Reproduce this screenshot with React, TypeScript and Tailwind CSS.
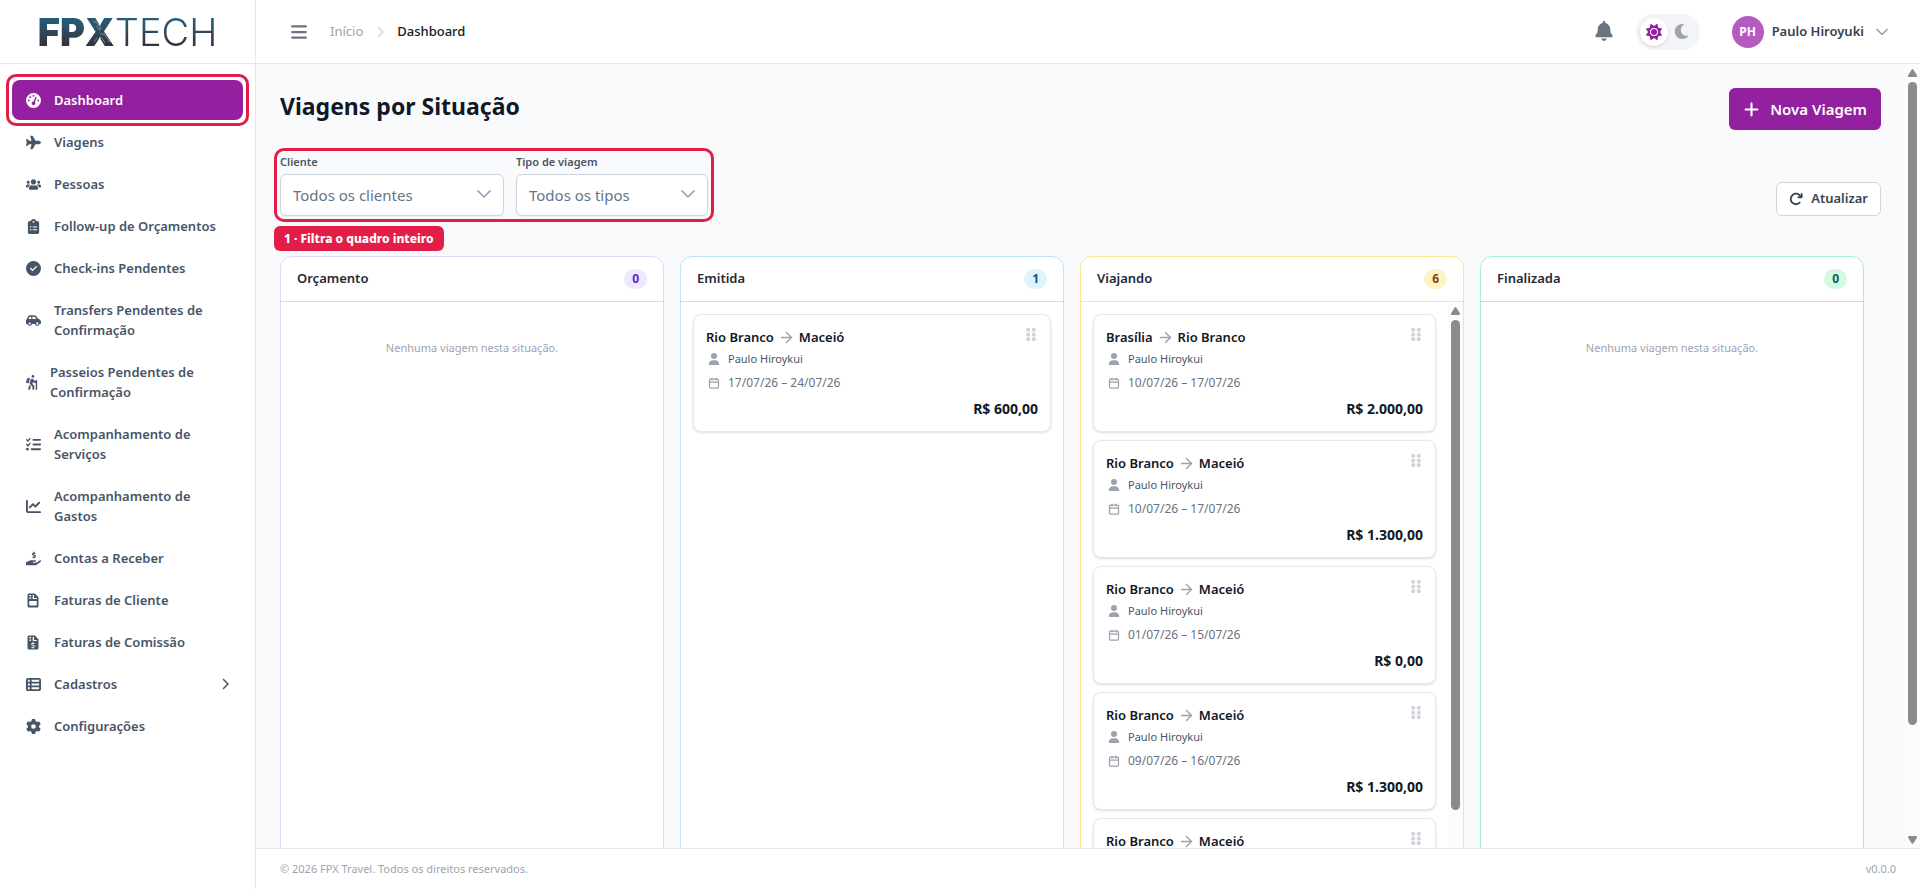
import type { ComponentType, ReactNode } from "react";
import {
  FaArrowRotateRight,
  FaBars,
  FaBell,
  FaCarSide,
  FaChartLine,
  FaChevronRight,
  FaCircleCheck,
  FaClipboardList,
  FaGaugeHigh,
  FaGear,
  FaGripVertical,
  FaListCheck,
  FaPersonHiking,
  FaPlane,
  FaPlus,
  FaSun,
  FaTableList,
  FaUser,
} from "react-icons/fa6";
import { FaHandHoldingUsd, FaMoon, FaUsers } from "react-icons/fa";
import { ArrowRight, Calendar, ChevronDown } from "lucide-react";

function InvoiceIcon({ className }: { className?: string }) {
  return (
    <svg viewBox="0 0 12 15" className={className} fill="currentColor" fillRule="evenodd" aria-hidden="true">
      <path d="M2 .5H7.800L11.500 4.200V13A1.500 1.500 0 0 1 10 14.500H2A1.500 1.500 0 0 1 .5 13V2A1.500 1.500 0 0 1 2 .5ZM2.200 2H4.200V3.300H2.200ZM2.200 4.500H4.200V5.800H2.200ZM5.700 2H7V5H9.800V5.900H5.700ZM3 8A.8.8 0 0 0 2.200 8.800V11.700A.8.8 0 0 0 3 12.500H9A.8.8 0 0 0 9.800 11.700V8.800A.8.8 0 0 0 9 8Z" />
    </svg>
  );
}

function InvoiceDollarIcon({ className }: { className?: string }) {
  return (
    <svg viewBox="0 0 12 15" className={className} aria-hidden="true">
      <path
        fill="currentColor"
        fillRule="evenodd"
        d="M2 .5H7.800L11.500 4.200V13A1.500 1.500 0 0 1 10 14.500H2A1.500 1.500 0 0 1 .5 13V2A1.500 1.500 0 0 1 2 .5ZM2.200 2H4.200V3.300H2.200ZM2.200 4.500H4.200V5.800H2.200ZM5.700 2H7V5H9.800V5.900H5.700Z"
      />
      <path
        fill="none"
        stroke="#fff"
        strokeWidth="1"
        d="M6 7.200V8.200M6 12.400V13.400M7.700 8.700C7.200 8.200 4.500 7.800 4.500 9.300 4.500 10.700 7.700 10 7.700 11.400 7.700 12.700 4.900 12.500 4.300 11.900"
      />
    </svg>
  );
}

type NavItem = {
  label: string;
  icon: ComponentType<{ className?: string }>;
  slot?: string;
  active?: boolean;
  submenu?: boolean;
};

const nav: NavItem[] = [
  { label: "Dashboard", icon: FaGaugeHigh, active: true },
  { label: "Viagens", icon: FaPlane },
  { label: "Pessoas", icon: FaUsers },
  { label: "Follow-up de Orçamentos", icon: FaClipboardList },
  { label: "Check-ins Pendentes", icon: FaCircleCheck },
  { label: "Transfers Pendentes de Confirmação", icon: FaCarSide },
  { label: "Passeios Pendentes de Confirmação", icon: FaPersonHiking, slot: "w-3.5" },
  { label: "Acompanhamento de Serviços", icon: FaListCheck },
  { label: "Acompanhamento de Gastos", icon: FaChartLine },
  { label: "Contas a Receber", icon: FaHandHoldingUsd },
  { label: "Faturas de Cliente", icon: InvoiceIcon },
  { label: "Faturas de Comissão", icon: InvoiceDollarIcon },
  { label: "Cadastros", icon: FaTableList, submenu: true },
  { label: "Configurações", icon: FaGear },
];

type Trip = { from: string; to: string; client: string; dates: string; price: string };
type Column = { title: string; count: number; border: string; badge: string; trips: Trip[]; scroll?: boolean };

const client = "Paulo Hiroykui";

const columns: Column[] = [
  { title: "Orçamento", count: 0, border: "border-[#ddd6fe]", badge: "bg-[#ede9fe] text-[#5b21b6]", trips: [] },
  {
    title: "Emitida",
    count: 1,
    border: "border-[#bae6fd]",
    badge: "bg-[#e0f2fe] text-[#075985]",
    trips: [{ from: "Rio Branco", to: "Maceió", client, dates: "17/07/26 – 24/07/26", price: "R$ 600,00" }],
  },
  {
    title: "Viajando",
    count: 6,
    border: "border-[#fde68a]",
    badge: "bg-[#fef3c7] text-[#92400e]",
    scroll: true,
    trips: [
      { from: "Brasília", to: "Rio Branco", client, dates: "10/07/26 – 17/07/26", price: "R$ 2.000,00" },
      { from: "Rio Branco", to: "Maceió", client, dates: "10/07/26 – 17/07/26", price: "R$ 1.300,00" },
      { from: "Rio Branco", to: "Maceió", client, dates: "01/07/26 – 15/07/26", price: "R$ 0,00" },
      { from: "Rio Branco", to: "Maceió", client, dates: "09/07/26 – 16/07/26", price: "R$ 1.300,00" },
      { from: "Rio Branco", to: "Maceió", client, dates: "09/07/26 – 16/07/26", price: "R$ 1.300,00" },
    ],
  },
  { title: "Finalizada", count: 0, border: "border-[#a7f3d0]", badge: "bg-[#d1fae5] text-[#065f46]", trips: [] },
];

function Logo() {
  return (
    <a
      href="#"
      aria-label="FPXTECH"
      className="relative flex bg-linear-to-b from-[#265c78] from-25% to-[#33343f] to-75% bg-clip-text font-[Inter,sans-serif] text-[38px] leading-[48px] text-transparent"
    >
      <span className="font-black">FPX</span>
      <span className="font-light">TECH</span>
      <svg
        viewBox="0 0 28 27"
        className="absolute top-[11px] left-[50px] h-[27px] w-7"
        fill="none"
        stroke="#b4c6d2"
        strokeWidth=".5"
        aria-hidden="true"
      >
        <path d="M5 3h3l4 6M8 7l4 5M12 15h4l5 7M11 18l3 1 3 5M18 14l3 5M6 23l3-4" />
        <circle cx="12.500" cy="9.500" r=".6" />
        <circle cx="21.500" cy="22.500" r=".6" />
      </svg>
    </a>
  );
}

function RailArrow({ className }: { className?: string }) {
  return (
    <svg viewBox="0 0 9 8" className={`h-2 w-[9px] shrink-0 ${className ?? ""}`} fill="#8b8b8b">
      <path d="M4.500 0C5 0 5.400.6 9 6.500 9 7.500 8.500 8 8 8H1C.5 8 0 7.500 0 6.500 3.600.6 4 0 4.500 0Z" />
    </svg>
  );
}

function Rail({ thumb, end }: { thumb: string; end?: boolean }) {
  return (
    <div aria-hidden="true" className="flex w-[15px] shrink-0 flex-col items-center bg-[#fcfcfc] pt-[5px] pb-1">
      <RailArrow />
      <div className={`mt-[5px] w-[9px] rounded-full bg-[#8b8b8b] ${thumb}`} />
      {end && <RailArrow className="mt-auto rotate-180" />}
    </div>
  );
}

function Filter({ id, label, width, children }: { id: string; label: string; width: string; children: ReactNode }) {
  return (
    <div className="flex flex-col gap-1">
      <label htmlFor={id} className="text-[11px] leading-4 font-semibold text-[#4b5563]">
        {label}
      </label>
      <div className={`relative ${width}`}>
        <select
          id={id}
          className="h-[42px] w-full appearance-none rounded-md border border-[#cbd5e1] bg-white pr-10 pl-3 text-[15px] text-[#64748b] shadow-xs"
        >
          {children}
        </select>
        <ChevronDown
          className="pointer-events-none absolute top-2 right-2 size-6 text-[#94a3b8]"
          strokeWidth={1.75}
        />
      </div>
    </div>
  );
}

function TripCard({ trip }: { trip: Trip }) {
  return (
    <article className="shrink-0 rounded-lg border border-[#e5e7eb] bg-white p-3 shadow-sm">
      <div className="flex items-start justify-between">
        <h3 className="flex items-center gap-1 text-[13px] leading-5 font-semibold text-[#111827]">
          {trip.from}
          <ArrowRight className="size-[17px] text-[#9ca3af]" />
          {trip.to}
        </h3>
        <button aria-label="Mover viagem" className="mr-0.5 text-[#d1d5db]">
          <FaGripVertical className="h-[15px] w-[10px]" />
        </button>
      </div>
      <p className="mt-1 flex items-center gap-2 pl-0.5 text-[11px] leading-4 text-[#4b5563]">
        <FaUser className="size-3 text-[#9ca3af]" />
        {trip.client}
      </p>
      <p className="mt-2 flex items-center gap-2 pl-0.5 text-xs leading-4 text-[#6b7280]">
        <Calendar className="size-3 text-[#9ca3af]" strokeWidth={2.5} />
        {trip.dates}
      </p>
      <p className="mt-2 text-right text-sm leading-5 font-bold text-[#111827]">{trip.price}</p>
    </article>
  );
}

function BoardColumn({ column }: { column: Column }) {
  return (
    <section className={`flex w-96 shrink-0 flex-col rounded-xl border bg-white ${column.border}`}>
      <header className={`flex h-[45px] shrink-0 items-center justify-between border-b px-4 ${column.border}`}>
        <h2 className="text-[13px] font-semibold text-[#1f2937]">{column.title}</h2>
        <span className={`rounded-full px-2 text-xs leading-5 font-bold ${column.badge}`}>{column.count}</span>
      </header>
      <div className="flex flex-1">
        <div className="flex flex-1 flex-col gap-2 p-3">
          {column.trips.map((trip, i) => (
            <TripCard key={i} trip={trip} />
          ))}
          {column.trips.length === 0 && (
            <p className="pt-6 text-center text-[11px] leading-5 text-[#9ca3af]">Nenhuma viagem nesta situação.</p>
          )}
        </div>
        {column.scroll && <Rail thumb="h-[490px]" />}
      </div>
    </section>
  );
}

export default function App() {
  return (
    <div className="flex h-screen overflow-hidden bg-[#f9fafb] font-['Noto_Sans',sans-serif] text-[#111827]">
      <aside className="flex w-64 shrink-0 flex-col border-r border-[#e2e8f0] bg-white">
        <div className="flex h-16 shrink-0 items-center justify-center border-b border-[#e2e8f0]">
          <Logo />
        </div>
        <nav className="flex flex-col gap-0.5 px-3 py-4">
          {nav.map(({ label, icon: Icon, slot, active, submenu }) => (
            <a
              key={label}
              href="#"
              className={`relative flex items-center gap-3 rounded-lg px-3 py-2.5 text-[13px] leading-5 font-semibold ${
                active ? "bg-[#93209e] text-white" : "text-[#475569]"
              }`}
            >
              <span className={`flex shrink-0 justify-center ${slot ?? "w-[18px]"}`}>
                <Icon className="h-[15px] w-auto shrink-0" />
              </span>
              <span className="max-w-[168px] flex-1">{label}</span>
              {submenu && <FaChevronRight className="ml-auto size-3" />}
              {active && (
                <span className="pointer-events-none absolute -inset-1.5 rounded-[10px] border-3 border-[#e11d48]" />
              )}
            </a>
          ))}
        </nav>
      </aside>

      <div className="flex min-w-0 flex-1 flex-col">
        <header className="flex h-16 shrink-0 items-center justify-between border-b border-[#e5e7eb] bg-white pr-7 pl-8">
          <div className="flex items-center gap-[22px]">
            <button aria-label="Menu" className="pl-0.5 text-[#6b7280]">
              <FaBars className="size-[18px]" />
            </button>
            <nav className="flex items-center gap-[11px] text-[13px]">
              <a href="#" className="text-[#9ca3af]">
                Início
              </a>
              <FaChevronRight className="size-3 text-[#d1d5db]" />
              <span className="font-medium text-[#111827]">Dashboard</span>
            </nav>
          </div>
          <div className="flex items-center">
            <button aria-label="Notificações" className="mr-[22px] pb-0.5 text-[#6b7280]">
              <FaBell className="size-5" />
            </button>
            <div className="mr-8 flex rounded-full bg-[#f3f4f6] p-1">
              <button
                aria-label="Tema claro"
                className="flex size-7 items-center justify-center rounded-full bg-white text-[#93209e] shadow-sm"
              >
                <FaSun className="size-4" />
              </button>
              <button aria-label="Tema escuro" className="flex size-7 items-center justify-center text-[#9ca3af]">
                <FaMoon className="size-[15px]" />
              </button>
            </div>
            <button className="flex items-center gap-2 text-[13px] font-semibold text-[#374151]">
              <span className="flex size-8 items-center justify-center rounded-full bg-[#b55bc0] text-xs font-bold text-white">
                PH
              </span>
              Paulo Hiroyuki
              <ChevronDown className="size-5 text-[#9ca3af]" />
            </button>
          </div>
        </header>

        <div className="flex min-h-0 flex-1">
          <main className="flex min-w-0 flex-1 flex-col overflow-hidden p-6 pb-0">
            <div className="flex items-start justify-between">
              <h1 className="text-[23px] leading-9 font-bold">Viagens por Situação</h1>
              <button className="flex h-[42px] items-center gap-2.5 rounded-md bg-[#93209e] px-3.5 text-[15px] font-semibold text-white">
                <FaPlus className="size-[17px]" />
                Nova Viagem
              </button>
            </div>

            <div className="mt-6 flex items-end justify-between">
              <div className="relative flex gap-3">
                <Filter id="cliente" label="Cliente" width="w-56">
                  <option>Todos os clientes</option>
                </Filter>
                <Filter id="tipo" label="Tipo de viagem" width="w-48">
                  <option>Todos os tipos</option>
                </Filter>
                <div className="pointer-events-none absolute -inset-1.5 rounded-[10px] border-3 border-[#e11d48]" />
                <div className="absolute top-[72px] -left-1.5 rounded-md bg-[#e11d48] px-2.5 text-xs leading-[25px] font-extrabold whitespace-nowrap text-white">
                  1 · Filtra o quadro inteiro
                </div>
              </div>
              <button className="flex h-[34px] items-center gap-2 rounded-md border border-[#d1d5db] bg-white px-3 text-[13px] font-semibold text-[#374151]">
                <FaArrowRotateRight className="size-3.5" />
                Atualizar
              </button>
            </div>

            <div className="mt-10 flex flex-1 gap-4">
              {columns.map((column) => (
                <BoardColumn key={column.title} column={column} />
              ))}
            </div>
          </main>
          <Rail thumb="h-[83%]" end />
        </div>

        <footer className="flex h-[41px] shrink-0 items-center justify-between border-t border-[#e5e7eb] bg-white px-6 text-[11px] text-[#9ca3af]">
          <span>© 2026 FPX Travel. Todos os direitos reservados.</span>
          <span>v0.0.0</span>
        </footer>
      </div>
    </div>
  );
}
